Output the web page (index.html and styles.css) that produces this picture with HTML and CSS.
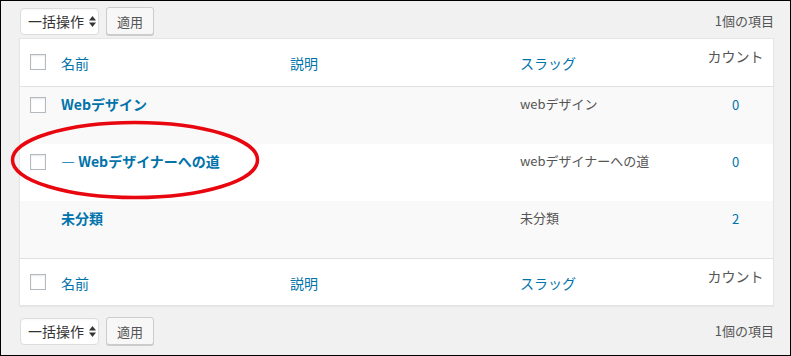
FILE: index.html
```html
<!DOCTYPE html>
<html lang="ja">

<head>
    <meta charset="UTF-8">
    <meta name="viewport" content="width=device-width, initial-scale=1.0">
    <title>カテゴリー</title>
    <link rel="stylesheet" href="styles.css">
</head>

<body>

    <div class="screen">

        <div class="tablenav">
            <div class="actions">
                <div class="bulk-select">
                    一括操作
                    <svg class="updown" width="7" height="11" viewBox="0 0 7 11">
                        <polygon points="0,4.5 3.5,0 7,4.5" />
                        <polygon points="0,6.5 7,6.5 3.5,11" />
                    </svg>
                </div>
                <span class="button">適用</span>
            </div>
            <div class="displaying-num">1個の項目</div>
        </div>

        <div class="terms">
            <div class="row head">
                <div class="cell cb"><span class="check"></span></div>
                <div class="cell"><a class="sort">名前</a></div>
                <div class="cell"><a class="sort">説明</a></div>
                <div class="cell"><a class="sort">スラッグ</a></div>
                <div class="cell num"><span class="count-head">カウント</span></div>
            </div>

            <div class="row alt">
                <div class="cell cb"><span class="check"></span></div>
                <div class="cell"><a class="row-title">Webデザイン</a></div>
                <div class="cell"></div>
                <div class="cell slug">webデザイン</div>
                <div class="cell num"><a class="count">0</a></div>
            </div>

            <div class="row">
                <div class="cell cb"><span class="check"></span></div>
                <div class="cell"><a class="row-title">— Webデザイナーへの道</a></div>
                <div class="cell"></div>
                <div class="cell slug">webデザイナーへの道</div>
                <div class="cell num"><a class="count">0</a></div>
            </div>

            <div class="row alt">
                <div class="cell cb"></div>
                <div class="cell"><a class="row-title">未分類</a></div>
                <div class="cell"></div>
                <div class="cell slug">未分類</div>
                <div class="cell num"><a class="count">2</a></div>
            </div>

            <div class="row foot">
                <div class="cell cb"><span class="check"></span></div>
                <div class="cell"><a class="sort">名前</a></div>
                <div class="cell"><a class="sort">説明</a></div>
                <div class="cell"><a class="sort">スラッグ</a></div>
                <div class="cell num"><span class="count-head">カウント</span></div>
            </div>
        </div>

        <div class="tablenav bottom">
            <div class="actions">
                <div class="bulk-select">
                    一括操作
                    <svg class="updown" width="7" height="11" viewBox="0 0 7 11">
                        <polygon points="0,4.5 3.5,0 7,4.5" />
                        <polygon points="0,6.5 7,6.5 3.5,11" />
                    </svg>
                </div>
                <span class="button">適用</span>
            </div>
            <div class="displaying-num">1個の項目</div>
        </div>

        <!-- 赤い丸印 -->
        <svg class="mark" width="252" height="84" viewBox="0 0 252 84">
            <ellipse cx="126" cy="42" rx="122.5" ry="37.5" fill="none" stroke="#e8070f" stroke-width="3.5" />
        </svg>

    </div>

</body>

</html>
```

FILE: styles.css
```css
html,
body {
    margin: 0;
}

body {
    font-family: "Noto Sans CJK JP", "Noto Sans", "Liberation Sans", sans-serif;
    color: #444;
}

.screen {
    position: relative;
    box-sizing: border-box;
    width: 791px;
    height: 356px;
    border: 1px solid #000;
    background-color: #f1f1f1;
    padding: 6px 16px 0 18px;
}

/* 一括操作バー */
.tablenav {
    display: flex;
    justify-content: space-between;
    align-items: center;
    height: 28px;
    padding-left: 1px;
    margin-bottom: 3px;
}

.tablenav.bottom {
    margin: 11px 0 0;
}

.actions {
    display: flex;
    align-items: center;
    gap: 7px;
}

.bulk-select {
    box-sizing: border-box;
    display: flex;
    align-items: center;
    gap: 5px;
    width: 79px;
    height: 27px;
    padding-left: 7px;
    background-color: #fff;
    border: 1px solid #ddd;
    border-radius: 4px;
    box-shadow: inset 0 1px 2px rgba(0, 0, 0, 0.04);
    font-size: 14px;
    line-height: 20px;
    color: #333;
}

.updown {
    fill: #333;
}

.button {
    box-sizing: border-box;
    display: flex;
    align-items: center;
    justify-content: center;
    width: 48px;
    height: 28px;
    background-color: #f7f7f7;
    border: 1px solid #ccc;
    border-radius: 3px;
    box-shadow: 0 1px 0 #ccc;
    font-size: 13px;
    color: #555;
}

.displaying-num {
    font-size: 13px;
    line-height: 20px;
    color: #555;
}

/* 一覧 */
.terms {
    background-color: #fff;
    border: 1px solid #e5e5e5;
    box-shadow: 0 1px 1px rgba(0, 0, 0, 0.04);
}

.row {
    display: grid;
    grid-template-columns: 31px 229px 230px 188px 75px;
    height: 57px;
    align-items: start;
}

.row.alt {
    background-color: #f9f9f9;
}

.row.head {
    height: 47px;
    border-bottom: 1px solid #e1e1e1;
}

.row.foot {
    height: 46px;
    border-top: 1px solid #e1e1e1;
}

.cell {
    padding: 7px 10px 0;
    font-size: 14px;
    line-height: 20px;
    white-space: nowrap;
}

.head .cell,
.foot .cell {
    padding-top: 14px;
}

.cell.cb {
    padding: 10px 0 0 10px;
}

.head .cell.cb,
.foot .cell.cb {
    padding-top: 15px;
}

.cell.num {
    padding-left: 0;
    padding-right: 0;
    text-align: center;
}

.head .cell.num,
.foot .cell.num {
    padding-top: 7px;
}

.check {
    display: block;
    box-sizing: border-box;
    width: 16px;
    height: 16px;
    background-color: #fff;
    border: 1px solid #b4b9be;
    box-shadow: inset 0 1px 2px rgba(0, 0, 0, 0.1);
}

.sort {
    color: #0073aa;
}

.count-head {
    color: #555;
}

.row-title {
    color: #0073aa;
    font-weight: 700;
}

.slug {
    font-size: 13px;
    color: #555;
}

.count {
    font-size: 13px;
    color: #0073aa;
}

.mark {
    position: absolute;
    left: 8px;
    top: 117px;
}
```
